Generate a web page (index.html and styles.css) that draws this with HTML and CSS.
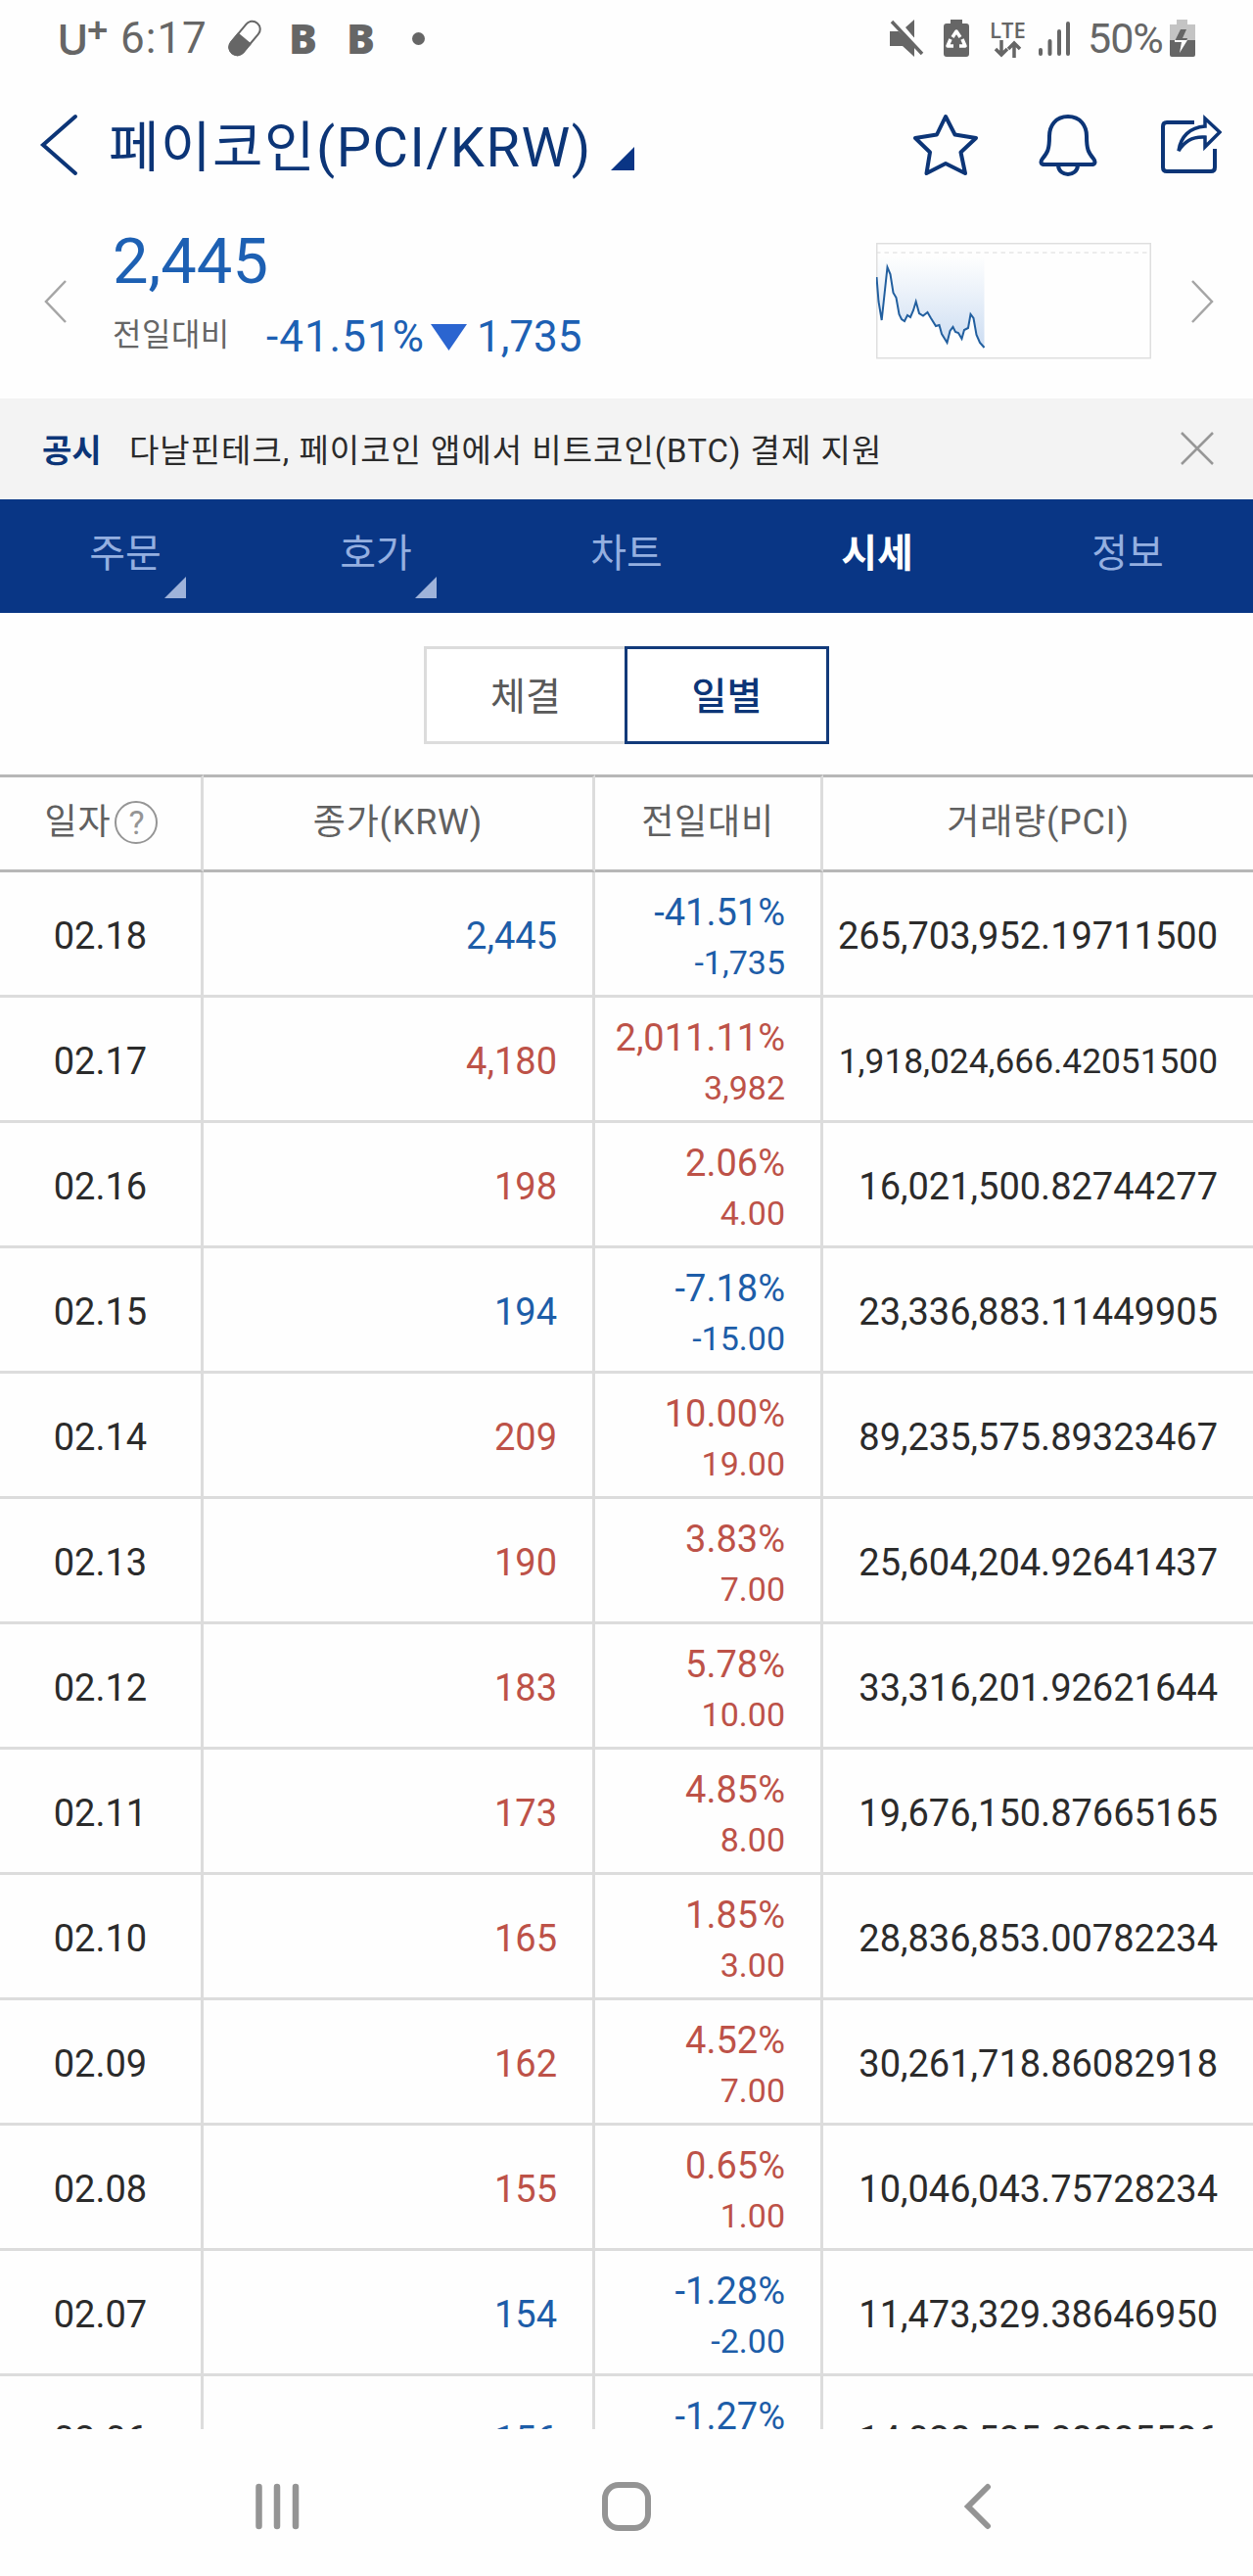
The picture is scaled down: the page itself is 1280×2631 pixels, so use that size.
FILE: index.html
```html
<!DOCTYPE html>
<html lang="ko">
<head>
    <meta charset="UTF-8">
    <meta name="viewport" content="width=device-width, initial-scale=1.0">
    <title>페이코인(PCI/KRW)</title>
    <link rel="stylesheet" href="styles.css">
</head>
<body>

    <div class="status-bar">
        <div class="status-left">
            <span class="carrier">U<sup>+</sup></span>
            <span class="clock">6:17</span>
            <svg class="pill" width="38" height="38" viewBox="0 0 38 38">
                <g transform="rotate(40 19 19)">
                    <rect x="11" y="-1" width="16" height="40" rx="8" fill="none" stroke="#666" stroke-width="2"/>
                    <path d="M10 19h18v12a9 9 0 0 1-18 0z" fill="#666"/>
                </g>
            </svg>
            <span class="app-b">B</span>
            <span class="app-b">B</span>
            <span class="dot"></span>
        </div>
        <div class="status-right">
            <svg class="mute" width="36" height="38" viewBox="0 0 36 38" fill="#666">
                <path d="M0 12h9L25 26v12L13 27H0zM16 8l9-8v19z"/>
                <path d="M4 0l31 33" stroke="#fefefe" stroke-width="5"/>
                <path d="M2 2l31 33" stroke="#666" stroke-width="3.5"/>
            </svg>
            <svg class="recycle" width="26" height="38" viewBox="0 0 26 38">
                <path d="M7 0h12v4h4q3 0 3 3v28q0 3-3 3H3q-3 0-3-3V7q0-3 3-3h4z" fill="#666"/>
                <path d="M9 18l4-6 4 6M19 20l3 7h-6M10 27H4l3-7" fill="none" stroke="#fff" stroke-width="3.5" stroke-linejoin="round"/>
            </svg>
            <div class="lte">
                <span>LTE</span>
                <svg width="30" height="18" viewBox="0 0 30 18" fill="none" stroke="#666" stroke-width="3.5">
                    <path d="M8 0v15M2 9l6 6 6-6M21 18V3M15 9l6-6 6 6"/>
                </svg>
            </div>
            <svg class="signal" width="32" height="35" viewBox="0 0 32 35" stroke="#666" stroke-width="4" stroke-linecap="round">
                <path d="M2 29v4M11.500 20v13M21 10v23M30 2v31"/>
            </svg>
            <span class="percent">50%</span>
            <svg width="26" height="38" viewBox="0 0 26 38">
                <path d="M7 0h11v5h8v17H0V5h7z" fill="#c4c4c4"/>
                <path d="M0 21h26v15q0 2-2 2H2q-2 0-2-2z" fill="#666"/>
                <path d="M11 10h6l-4 9h5l-1 3H5z" fill="#666"/>
                <path d="M5 21h13l-8 13 2-11H5z" fill="#fff"/>
            </svg>
        </div>
    </div>

    <div class="header">
        <svg class="back" width="40" height="64" viewBox="0 0 40 64" fill="none" stroke="#0c3577" stroke-width="4" stroke-linecap="round">
            <path d="M37 3L4 32l33 29"/>
        </svg>
        <h1>페이코인(PCI/KRW)</h1>
        <svg class="corner" width="24" height="24" viewBox="0 0 24 24"><path d="M24 0v24H0z" fill="#0a3585"/></svg>
        <div class="header-icons">
            <svg width="66" height="64" viewBox="0 0 66 64" fill="none" stroke="#0c3577" stroke-width="4" stroke-linejoin="round">
                <path d="M33 3L42.500 21.500L64 25L48.500 39.500L53 61L33 51L13.500 61L17 39.500L2 25L24 21.500Z"/>
            </svg>
            <svg width="60" height="64" viewBox="0 0 60 64" fill="none" stroke="#0c3577" stroke-width="4" stroke-linejoin="round">
                <path d="M30 3C17 3 11 13 11 23c0 14-2 17-7 23-3 4-1 6 2 6h48c3 0 5-2 2-6-5-6-7-9-7-23C49 13 43 3 30 3zM20 53c1 12 19 12 20 0"/>
            </svg>
            <svg class="share" width="62" height="64" viewBox="0 0 62 64" fill="none" stroke="#0c3577" stroke-width="4">
                <path d="M34 9H6q-4 0-4 4v42q0 4 4 4h45q4 0 4-4V36"/>
                <path d="M45 5l15 14-15 15V24C32 23 24 28 18 38 20 24 29 14 45 13z" stroke-width="3.500"/>
            </svg>
        </div>
    </div>

    <div class="summary">
        <svg class="prev" width="24" height="44" viewBox="0 0 24 44" fill="none" stroke="#a5a5a5" stroke-width="2.500">
            <path d="M22 1L2 22l20 21"/>
        </svg>
        <div class="price-box">
            <div class="price">2,445</div>
            <div class="change">
                <span class="label">전일대비</span>
                <span class="rate">-41.51%</span>
                <svg width="38" height="27" viewBox="0 0 38 27"><path d="M0 0h37L18.500 27z" fill="#2b65d0"/></svg>
                <span class="diff">1,735</span>
            </div>
        </div>
        <svg class="mini-chart" width="281" height="119" viewBox="0 0 281 119">
            <defs>
                <linearGradient id="area" x1="0" y1="0" x2="0" y2="1">
                    <stop offset="0" stop-color="#d0e0f3" stop-opacity="0"/>
                    <stop offset="1" stop-color="#cbdcf2"/>
                </linearGradient>
            </defs>
            <path d="M0 14V35L2.500 60L5.700 79L11.500 25L14.500 32L17.500 51L20.500 56L23.500 73L26 78L29 80L32 74L35 76L38 69L40.700 60L44 72L48 74.500L52.500 71L56 77L61 85L64.500 84L67 93L72.500 102L75.500 90L78.500 86L81 91L84 92L87.500 98L90 89L94 87L96.500 73L99.500 77L102.500 94L106 102L110.500 107V14Z" fill="url(#area)"/>
            <path d="M0 10H281" stroke="#ececec" stroke-width="2" stroke-dasharray="4.500 4"/>
            <rect x=".75" y=".75" width="279.500" height="117" fill="none" stroke="#dfdfdf" stroke-width="1.500"/>
            <path d="M0.500 35L2.500 60L5.700 79L11.500 25L14.500 32L17.500 51L20.500 56L23.500 73L26 78L29 80L32 74L35 76L38 69L40.700 60L44 72L48 74.500L52.500 71L56 77L61 85L64.500 84L67 93L72.500 102L75.500 90L78.500 86L81 91L84 92L87.500 98L90 89L94 87L96.500 73L99.500 77L102.500 94L106 102L110.500 107" fill="none" stroke="#225f9f" stroke-width="2"/>
        </svg>
        <svg class="next" width="24" height="44" viewBox="0 0 24 44" fill="none" stroke="#a5a5a5" stroke-width="2.500">
            <path d="M2 1l20 21L2 43"/>
        </svg>
    </div>

    <div class="notice">
        <b>공시</b>
        <span class="notice-text">다날핀테크, 페이코인 앱에서 비트코인(BTC) 결제 지원</span>
        <svg width="34" height="34" viewBox="0 0 34 34" stroke="#979797" stroke-width="2.500"><path d="M1 1l32 32M33 1L1 33"/></svg>
    </div>

    <div class="menu">
        <a class="has-sub">주문</a>
        <a class="has-sub">호가</a>
        <a>차트</a>
        <a class="active">시세</a>
        <a>정보</a>
    </div>

    <div class="tabs">
        <button>체결</button>
        <button class="on">일별</button>
    </div>

    <div class="table-wrap">
        <table>
            <colgroup><col class="c-date"><col class="c-close"><col class="c-change"><col class="c-volume"></colgroup>
            <thead>
                <tr>
                    <th><div class="date-head">일자<span class="help">?</span></div></th>
                    <th>종가(KRW)</th>
                    <th>전일대비</th>
                    <th>거래량(PCI)</th>
                </tr>
            </thead>
            <tbody>
                <tr class="down"><td>02.18</td><td>2,445</td><td>-41.51%<small>-1,735</small></td><td>265,703,952.19711500</td></tr>
                <tr class="up"><td>02.17</td><td>4,180</td><td>2,011.11%<small>3,982</small></td><td class="long">1,918,024,666.42051500</td></tr>
                <tr class="up"><td>02.16</td><td>198</td><td>2.06%<small>4.00</small></td><td>16,021,500.82744277</td></tr>
                <tr class="down"><td>02.15</td><td>194</td><td>-7.18%<small>-15.00</small></td><td>23,336,883.11449905</td></tr>
                <tr class="up"><td>02.14</td><td>209</td><td>10.00%<small>19.00</small></td><td>89,235,575.89323467</td></tr>
                <tr class="up"><td>02.13</td><td>190</td><td>3.83%<small>7.00</small></td><td>25,604,204.92641437</td></tr>
                <tr class="up"><td>02.12</td><td>183</td><td>5.78%<small>10.00</small></td><td>33,316,201.92621644</td></tr>
                <tr class="up"><td>02.11</td><td>173</td><td>4.85%<small>8.00</small></td><td>19,676,150.87665165</td></tr>
                <tr class="up"><td>02.10</td><td>165</td><td>1.85%<small>3.00</small></td><td>28,836,853.00782234</td></tr>
                <tr class="up"><td>02.09</td><td>162</td><td>4.52%<small>7.00</small></td><td>30,261,718.86082918</td></tr>
                <tr class="up"><td>02.08</td><td>155</td><td>0.65%<small>1.00</small></td><td>10,046,043.75728234</td></tr>
                <tr class="down"><td>02.07</td><td>154</td><td>-1.28%<small>-2.00</small></td><td>11,473,329.38646950</td></tr>
                <tr class="down"><td>02.06</td><td>156</td><td>-1.27%<small>-2.00</small></td><td>14,028,525.28885586</td></tr>
            </tbody>
        </table>
    </div>

    <div class="bottom-nav">
        <svg width="46" height="50" viewBox="0 0 46 50" stroke="#949494" stroke-width="6.500" stroke-linecap="round">
            <path d="M4.500 5v40M23 5v40M42 5v40"/>
        </svg>
        <svg class="home" width="52" height="52" viewBox="0 0 52 52" fill="none" stroke="#949494" stroke-width="6">
            <rect x="4" y="4" width="44" height="44" rx="14"/>
        </svg>
        <svg width="30" height="50" viewBox="0 0 30 50" fill="none" stroke="#949494" stroke-width="6" stroke-linecap="round">
            <path d="M25 5L5 25l20 20"/>
        </svg>
    </div>

</body>
</html>
```
FILE: styles.css
```css
* {
    box-sizing: border-box;
}

body {
    margin: 0;
    height: 2631px;
    background-color: #fefefe;
    color: #2b2b2b;
    font-family: Roboto, "Noto Sans CJK KR", sans-serif;
    overflow: hidden;
}

svg {
    display: block;
    flex-shrink: 0;
}

/* status bar */
.status-bar {
    display: flex;
    justify-content: space-between;
    height: 78px;
    padding: 0 59px 0 58px;
    color: #666;
}

.status-left, .status-right {
    display: flex;
    align-items: center;
    height: 78px;
    line-height: 78px;
}

.carrier {
    width: 65px;
    font-family: "Open Sans", sans-serif;
    font-size: 44px;
    font-weight: 600;
    letter-spacing: -2px;
}

.carrier sup {
    font-size: 38px;
    font-weight: 700;
    line-height: 0;
    vertical-align: 12px;
}

.clock {
    width: 108px;
    font-size: 44px;
    letter-spacing: 1px;
}

.app-b {
    width: 59px;
    font-family: "Open Sans", sans-serif;
    font-size: 43px;
    font-weight: 800;
}

.pill {
    margin-right: 26px;
}

.dot {
    width: 13px;
    height: 13px;
    margin-left: 8px;
    border-radius: 50%;
    background-color: #666;
}

.recycle {
    margin: 0 21px 0 19px;
}

.lte {
    width: 38px;
    font-family: "Open Sans", sans-serif;
    font-size: 22px;
    font-weight: 600;
    line-height: 22px;
}

.lte svg {
    margin: 0 0 0 4px;
}

.signal {
    margin: 0 18px 0 12px;
}

.percent {
    width: 84px;
    font-size: 43px;
    letter-spacing: -1px;
}

/* title */
.header {
    display: flex;
    align-items: center;
    height: 140px;
    padding: 0 32px 0 40px;
}

.header h1 {
    width: 491px;
    margin: 5px 22px 0 31px;
    color: #0c3577;
    font-size: 56px;
    font-weight: 400;
    line-height: 80px;
    letter-spacing: 1.5px;
    white-space: nowrap;
}

.corner {
    margin-top: 28px;
}

.header-icons {
    display: flex;
    gap: 62px;
    margin-left: auto;
}

.share {
    margin-left: 3px;
}

/* current price */
.summary {
    display: flex;
    height: 189px;
}

.prev {
    margin: 68px 46px 0 45px;
}

.price-box {
    width: 780px;
    color: #1d60b3;
}

.price {
    padding-top: 12px;
    font-size: 65px;
    line-height: 74px;
}

.change {
    display: flex;
    align-items: center;
    height: 80px;
    font-size: 44px;
}

.label {
    width: 157px;
    color: #666;
    font-size: 32px;
    line-height: 40px;
    margin-top: -4px;
    letter-spacing: 0.5px;
}

.rate {
    width: 168px;
    letter-spacing: 1px;
}

.diff {
    margin-left: 9px;
}

.mini-chart {
    margin-top: 30px;
}

.next {
    margin: 68px 0 0 40px;
}

/* notice */
.notice {
    display: flex;
    align-items: center;
    height: 103px;
    padding: 0 40px 2px 43px;
    background-color: #f3f3f3;
    font-size: 33px;
}

.notice b {
    width: 89px;
    color: #0c3577;
}

.notice-text {
    flex: 1;
    letter-spacing: 1px;
    white-space: nowrap;
}

/* main menu */
.menu {
    display: flex;
    height: 116px;
    background-color: #093685;
}

.menu a {
    position: relative;
    flex: 1;
    color: #94afe0;
    font-size: 40px;
    line-height: 112px;
    text-align: center;
}

.menu .active {
    color: #fff;
    font-weight: 700;
}

.has-sub::after {
    content: "";
    position: absolute;
    right: 66px;
    bottom: 15px;
    border-left: 22px solid transparent;
    border-bottom: 22px solid #9fb3da;
}

/* sub tabs */
.tabs {
    display: flex;
    justify-content: center;
    padding-top: 34px;
    height: 165px;
}

.tabs button {
    width: 205px;
    height: 100px;
    padding: 0 0 4px;
    border: 3px solid #dcdcdc;
    border-right: 0;
    background: #fff;
    color: #595959;
    font-family: inherit;
    font-size: 39px;
}

.tabs .on {
    width: 209px;
    border: 3px solid #123a7a;
    color: #0c3577;
    font-weight: 500;
}

/* daily prices, last row is cut by the bottom bar */
.table-wrap {
    height: 1690px;
    overflow: hidden;
}

table {
    width: 1280px;
    table-layout: fixed;
    border-collapse: separate;
    border-spacing: 0;
}

.c-date { width: 208px; }
.c-close { width: 400px; }
.c-change { width: 233px; }
.c-volume { width: 439px; }

th, td {
    border-right: 3px solid #dcdcdc;
}

th:last-child, td:last-child {
    border-right: 0;
}

th {
    height: 100px;
    padding: 0 0 3px;
    border-top: 3px solid #b7b7b7;
    border-bottom: 3px solid #b7b7b7;
    color: #606060;
    font-size: 36px;
    font-weight: 400;
    line-height: 50px;
    letter-spacing: 0.8px;
}

.date-head {
    display: flex;
    justify-content: center;
    align-items: center;
    gap: 4px;
    padding-left: 2px;
}

.help {
    width: 44px;
    height: 44px;
    border: 2px solid #959595;
    border-radius: 50%;
    color: #959595;
    font-size: 34px;
    line-height: 40px;
    letter-spacing: 0;
}

td {
    height: 128px;
    padding: 4px 36px 0 0;
    border-bottom: 3px solid #dcdcdc;
    font-size: 38px;
    line-height: 52px;
    text-align: right;
}

td:first-child {
    padding-right: 0;
    text-align: center;
}

td:nth-child(3) {
    padding: 6px 36px 0 0;
}

td.long {
    font-size: 35.3px;
}

small {
    display: block;
    font-size: 34px;
    line-height: 50px;
}

.up td:nth-child(2), .up td:nth-child(3) {
    color: #bd5248;
}

.down td:nth-child(2), .down td:nth-child(3) {
    color: #1d5da8;
}

/* android navigation */
.bottom-nav {
    display: flex;
    justify-content: space-between;
    align-items: center;
    height: 150px;
    padding: 8px 266px 0 260px;
}

.home {
    margin-right: 10px;
}
```
